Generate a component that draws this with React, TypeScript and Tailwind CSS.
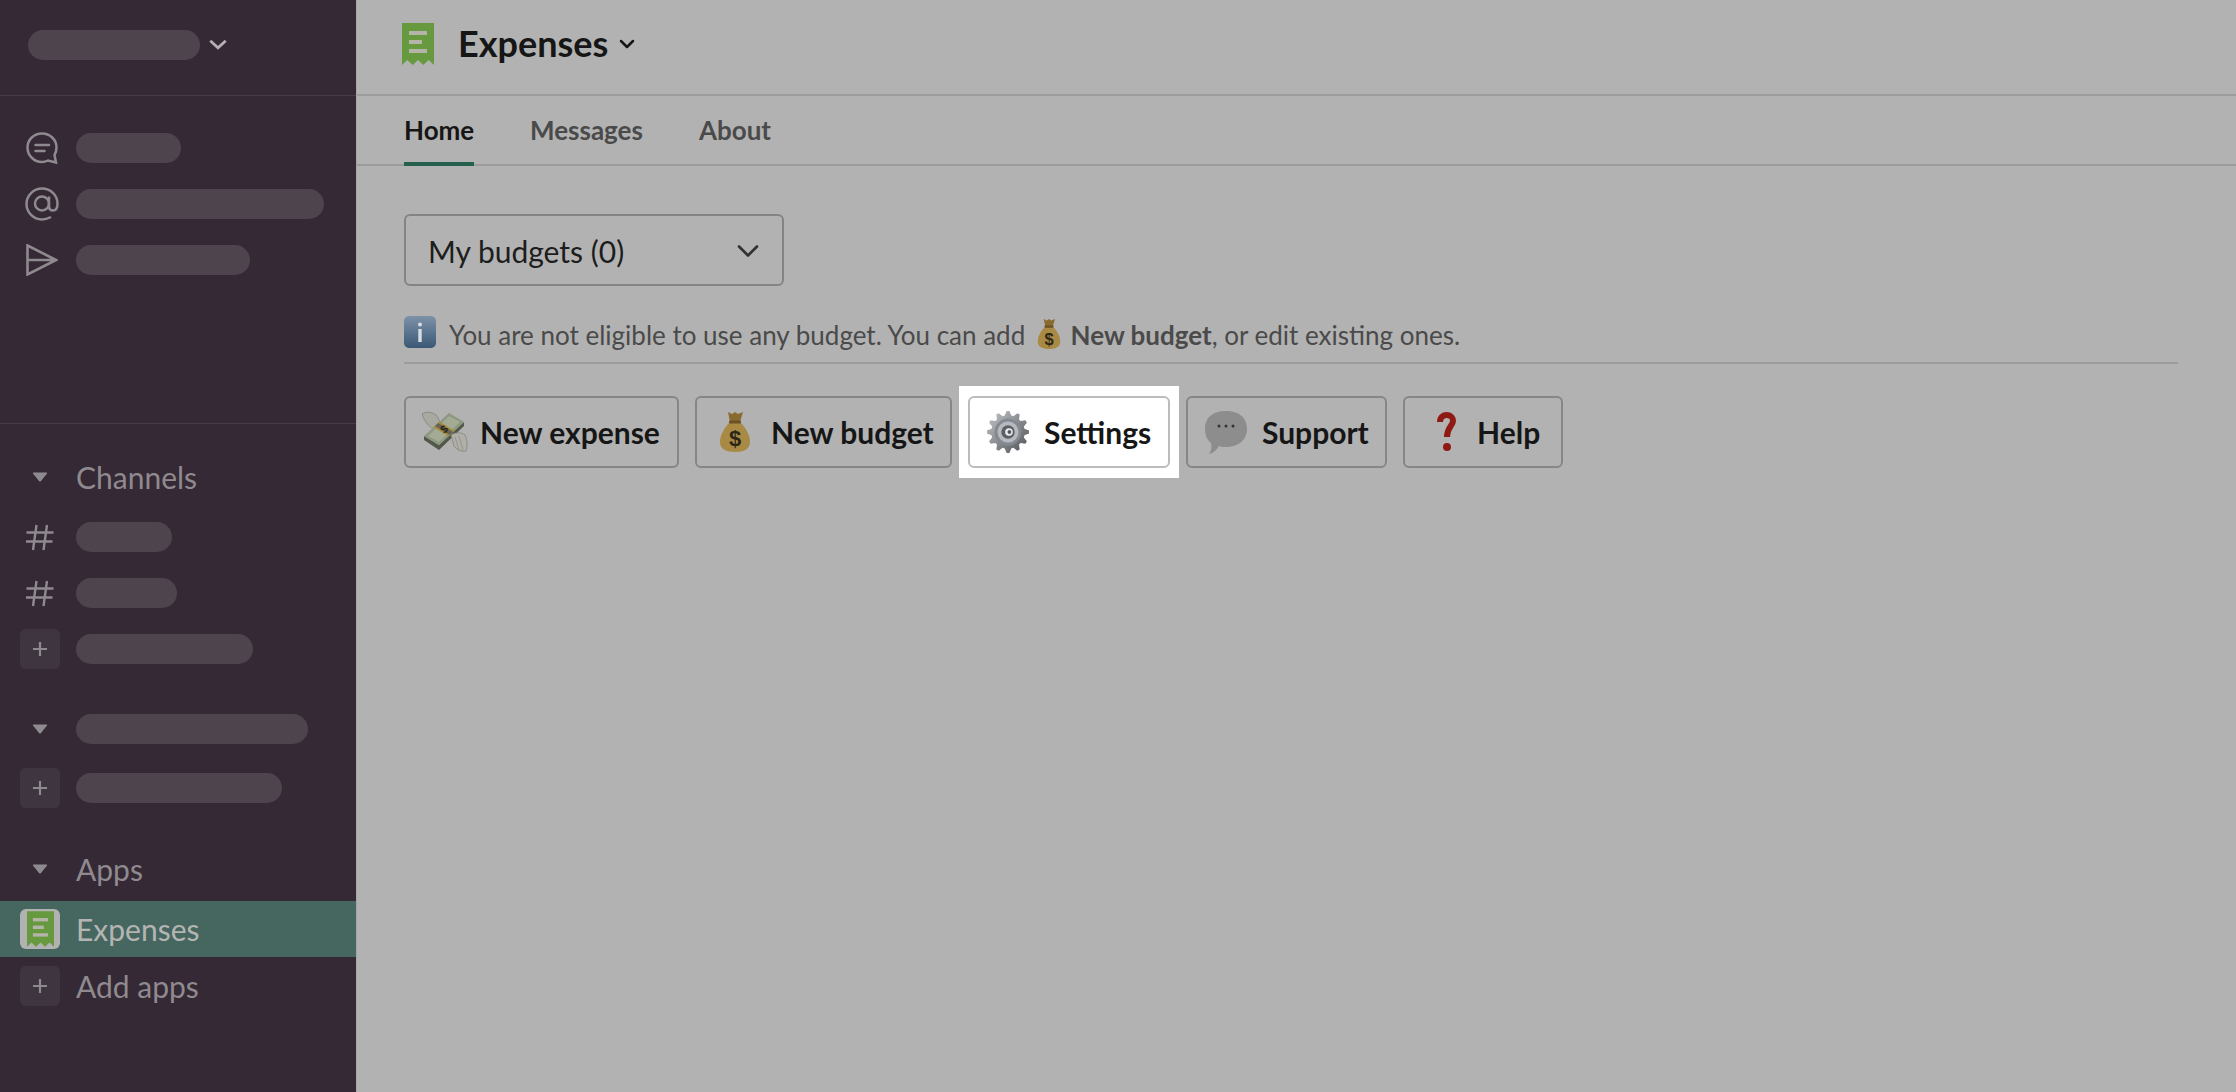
import { ChevronDown } from "lucide-react";
import type { ReactNode } from "react";

// --- ICONS ---
function Receipt({ className }: { className?: string }) {
  return (
    <svg viewBox="0 0 32 42" className={className}>
      <path d="M0 0H32V42L26.7 37L21.3 42L16 37L10.7 42L5.3 37L0 42Z" fill="#67993f" />
      <rect x="7" y="8" width="18" height="4" fill="#b4b4a8" />
      <rect x="7" y="17" width="13" height="4" fill="#b4b4a8" />
      <rect x="7" y="26" width="18" height="4" fill="#b4b4a8" />
    </svg>
  );
}

function Caret() {
  return (
    <svg viewBox="0 0 16 10" className="w-4 h-2.5">
      <path d="M1 1.5Q0.5 0.5 2 0.5H14Q15.5 0.5 15 1.5L9 9Q8 10 7 9Z" fill="#8f8a8f" />
    </svg>
  );
}

function HashIcon() {
  return (
    <svg viewBox="0 0 28 28" className="w-7 h-7" fill="none" stroke="#8f8a8f" strokeWidth="2.4">
      <path d="M0.5 9.5H27.500M0 18.500H26.500M10.500 2L7 27M21 2L17.500 27" />
    </svg>
  );
}

function PlusBox() {
  return (
    <div className="w-10 h-10 rounded-md bg-[#3f3540] flex items-center justify-center">
      <svg viewBox="0 0 16 16" className="w-4 h-4" stroke="#8f8a8f" strokeWidth="2.2">
        <path d="M8 1V15M1 8H15" />
      </svg>
    </div>
  );
}

function ThreadIcon() {
  return (
    <svg viewBox="0 0 32 32" className="w-8 h-8 ml-1" fill="none" stroke="#8f8a8f" strokeWidth="2.5">
      <path d="M16 1.500C8 1.500 1.500 7.500 1.500 15.500S8 30 16 30C18.500 30 20 29.500 22 28.500L30 30.500L28.500 23C30 20.500 30.500 18 30.500 15.500C30.500 7.500 24 1.500 16 1.500Z" />
      <path d="M9.500 13H23M9.500 19H18.500" strokeLinecap="round" />
    </svg>
  );
}

function AtIcon() {
  return (
    <svg viewBox="0 0 34 34" className="w-[34px] h-[34px] ml-1" fill="none" stroke="#8f8a8f" strokeWidth="2.5">
      <circle cx="17" cy="16.500" r="7" />
      <path d="M24 9.500V19C24 22.500 26 23.500 28 23.500C31 23.500 32.500 20.500 32.500 16.500C32.500 8 25.500 1.500 17 1.500C8.500 1.500 1.500 8.500 1.500 17C1.500 25.500 8.500 32.500 17 32.500C20 32.500 23 31.500 26 30" />
    </svg>
  );
}

function SendIcon() {
  return (
    <svg viewBox="0 0 32 32" className="w-8 h-8 ml-1" fill="none" stroke="#8f8a8f" strokeWidth="2.6">
      <path d="M1.500 1.500L30 16L1.500 30.500ZM1.500 16H30" />
    </svg>
  );
}

function InfoEmoji() {
  return (
    <svg viewBox="0 0 32 32" className="w-8 h-8 shrink-0">
      <defs>
        <linearGradient id="info" x1="0" y1="0" x2="0" y2="1">
          <stop offset="0" stopColor="#7d92a8" />
          <stop offset="1" stopColor="#3a5876" />
        </linearGradient>
      </defs>
      <rect width="32" height="32" rx="5" fill="url(#info)" />
      <circle cx="16" cy="8.500" r="2" fill="#d8dde2" />
      <rect x="14.300" y="13" width="3.400" height="13" fill="#d8dde2" />
    </svg>
  );
}

function BagEmoji({ className }: { className?: string }) {
  return (
    <svg viewBox="0 0 32 42" className={className}>
      <path d="M9 1L13 3L16 1L19 3L24 1L21 11H11Z" fill="#8a6b2f" />
      <path d="M11 11C5 17 1 24 1 31C1 38 7 41 16 41C25 41 31 38 31 31C31 24 27 17 21 11Z" fill="#a98a45" />
      <rect x="10" y="9.500" width="12" height="3" rx="1" fill="#6b5224" />
      <text x="16" y="35" textAnchor="middle" fontSize="22" fontFamily="Liberation Sans" fontWeight="700" fill="#2b2716">
        $
      </text>
    </svg>
  );
}

function WingsEmoji() {
  return (
    <svg viewBox="0 0 46 42" className="w-[46px] h-[42px]">
      {/* back wing */}
      <path d="M0 3C5 0 10 1 14 4C17 7 18 11 18 16L12 18C7 16 2 10 0 3Z" fill="#a9a9a1" stroke="#7c7c76" strokeWidth="0.7" />
      {/* bundle: thick edge, then the top note */}
      <path d="M2 25L17 34L42 11V15L17 39L2 29Z" fill="#52584a" />
      <path d="M2 25L27 2L42 11L17 34Z" fill="#8d9880" />
      <path d="M6 25L27 5L38 11L17 31Z" fill="#a3ab95" />
      {/* paper band */}
      <path d="M11.500 16.300L17.500 10.700L32.500 19.700L26.500 25.300Z" fill="#a98a35" />
      <path d="M13 14.900L16 12.100L31 21.100L28 23.900Z" fill="#66645a" />
      <text x="22" y="22" textAnchor="middle" fontSize="11" fontFamily="Liberation Sans" fontWeight="700" fill="#2b2716" transform="rotate(-43 22 18)">
        $
      </text>
      {/* front wing */}
      <path d="M29 24C33 21 39 21 43 24C45 28 46 34 44 40C40 41 35 39 32 35Z" fill="#b0b0a8" stroke="#7c7c76" strokeWidth="0.7" />
      <path d="M33 26L37 39M37 25L41 39" fill="none" stroke="#8b8b84" strokeWidth="0.7" />
    </svg>
  );
}

// gear outline, worked out from tooth count so the teeth stay even
const gearPoints = Array.from({ length: 48 }, (_, i) => {
  const step = i % 4;
  const r = step === 0 || step === 1 ? 22 : 17.5;
  const a = ((i - 0.5) / 48) * Math.PI * 2;
  return `${(23 + r * Math.cos(a)).toFixed(2)},${(23 + r * Math.sin(a)).toFixed(2)}`;
}).join(" ");

function GearEmoji() {
  return (
    <svg viewBox="0 0 46 46" className="w-[44px] h-[46px]">
      <defs>
        <linearGradient id="gear" x1="0" y1="0" x2="1" y2="1">
          <stop offset="0" stopColor="#c3c6cb" />
          <stop offset="1" stopColor="#4e5257" />
        </linearGradient>
      </defs>
      <polygon points={gearPoints} fill="url(#gear)" />
      <circle cx="23" cy="23" r="14" fill="#858a90" />
      <circle cx="23" cy="23" r="11" fill="#b6babf" />
      <circle cx="23" cy="23" r="7" fill="#5c6066" />
      <circle cx="24" cy="23" r="4" fill="#eceef0" />
      <circle cx="24.500" cy="23" r="2" fill="#55595e" />
    </svg>
  );
}

function BubbleEmoji() {
  return (
    <svg viewBox="0 0 44 44" className="w-11 h-11">
      <path d="M22 1C33 1 43 6 43 19C43 31 33 37 22 37C19 37 17 37 15 36C13 40 9 43 5 44C7 41 8 37 7 33C3 30 1 25 1 19C1 6 11 1 22 1Z" fill="#8d8d8d" />
      <circle cx="15" cy="16" r="1.500" fill="#333" />
      <circle cx="22" cy="16" r="1.500" fill="#333" />
      <circle cx="29" cy="16" r="1.500" fill="#333" />
    </svg>
  );
}

function QuestionEmoji() {
  return (
    <svg viewBox="0 0 20 42" className="w-5 h-[42px]">
      <path d="M3 11C3 6 6 4 10 4C14 4 16 7 16 10C16 15 10 16 10 26" fill="none" stroke="#8f1a14" strokeWidth="6" />
      <circle cx="10" cy="36" r="4" fill="#8f1a14" />
    </svg>
  );
}

// --- SIDEBAR ---
function SideRow({ icon, children, className = "" }: { icon: ReactNode; children: ReactNode; className?: string }) {
  return (
    <div className={`h-14 flex items-center shrink-0 ${className}`}>
      <div className="w-20 pl-5 pr-5 flex justify-center shrink-0">{icon}</div>
      <div className="-ml-1">{children}</div>
    </div>
  );
}

function Pill({ w }: { w: string }) {
  return <div className={`h-[30px] rounded-full bg-[#4e444e] ${w}`} />;
}

function Sidebar() {
  return (
    <aside className="w-[356px] shrink-0 bg-[#342934] flex flex-col text-[30px] text-[#8f8a8f]">
      <div className="h-[96px] border-b border-[#473c47] pl-7 pb-[6px] flex items-center gap-[9px] shrink-0">
        <div className="h-[30px] w-[172px] rounded-full bg-[#4e444e]" />
        <svg viewBox="0 0 16 10" className="w-[18px] h-[11px]" fill="none" stroke="#b4b0b4" strokeWidth="2.500">
          <path d="M1 1.500L8 8L15 1.500" />
        </svg>
      </div>

      <div className="h-[328px] border-b border-[#473c47] pt-6 shrink-0">
        <SideRow icon={<ThreadIcon />}><Pill w="w-[105px]" /></SideRow>
        <SideRow icon={<AtIcon />}><Pill w="w-[248px]" /></SideRow>
        <SideRow icon={<SendIcon />}><Pill w="w-[174px]" /></SideRow>
      </div>

      <div className="pt-[25px] flex flex-col">
        <SideRow icon={<Caret />}>Channels</SideRow>
        <SideRow icon={<HashIcon />} className="mt-[4px]"><Pill w="w-[96px]" /></SideRow>
        <SideRow icon={<HashIcon />}><Pill w="w-[101px]" /></SideRow>
        <SideRow icon={<PlusBox />}><Pill w="w-[177px]" /></SideRow>
        <SideRow icon={<Caret />} className="mt-[24px]"><Pill w="w-[232px]" /></SideRow>
        <SideRow icon={<PlusBox />} className="mt-[3px]"><Pill w="w-[206px]" /></SideRow>
        <SideRow icon={<Caret />} className="mt-[25px]">Apps</SideRow>
        <SideRow
          className="mt-[4px] bg-[#46675f] text-[#b4b4b4]"
          icon={
            <div className="w-10 h-10 rounded-md bg-[#b2b2b2] flex justify-center pt-[2px] overflow-hidden">
              <Receipt className="w-[27px] h-9" />
            </div>
          }
        >
          Expenses
        </SideRow>
        <SideRow icon={<PlusBox />} className="mt-px">Add apps</SideRow>
      </div>
    </aside>
  );
}

// --- MAIN PANE ---
function ActionButton({ icon, label, className = "" }: { icon: ReactNode; label: string; className?: string }) {
  return (
    <div className={`h-[72px] rounded-md border-2 border-[#868686] flex items-center gap-3 text-[30px] font-bold text-[#161616] ${className}`}>
      {icon}
      {label}
    </div>
  );
}

export default function App() {
  return (
    <div className="flex h-screen w-full overflow-hidden bg-[#b2b2b2] font-[Lato,sans-serif]">
      <Sidebar />
      <main className="flex-1 min-w-0 border-l border-[#a5a5a5]">
        <header className="h-[96px] border-b-2 border-[#9c9c9c] pl-[45px] pb-[6px] flex items-center">
          <Receipt className="w-8 h-[42px]" />
          <h1 className="ml-[24px] -mt-[2px] text-[36px] font-bold text-[#161616]">Expenses</h1>
          <ChevronDown className="ml-[7px] w-6 h-6 text-[#161616]" strokeWidth={2.5} />
        </header>

        <nav className="h-[70px] border-b-2 border-[#9c9c9c] pl-[47px] flex gap-14 text-[26px] font-bold text-[#4a4a4a]">
          <div className="h-[70px] w-[70px] pt-0.5 border-b-4 border-[#255f4d] flex items-center text-[#161616]">Home</div>
          <div className="h-[68px] flex items-center">Messages</div>
          <div className="h-[68px] flex items-center">About</div>
        </nav>

        <section className="pl-[47px] pr-[58px] pt-12">
          <div className="w-[380px] h-[72px] rounded-md border-2 border-[#848484] pl-[22px] pr-4 pt-0.5 flex items-center justify-between text-[30px] text-[#1d1d1d]">
            My budgets (0)
            <ChevronDown className="w-9 h-9 text-[#333]" strokeWidth={1.8} />
          </div>

          <div className="mt-[30px] h-[48px] border-b-2 border-[#9c9c9c] flex items-start text-[26px] text-[#4a4a4a]">
            <InfoEmoji />
            <p className="ml-[13px] mt-[3px] leading-8">
              You are not eligible to use any budget. You can add{" "}
              <BagEmoji className="inline w-6 h-8 -mt-2 ml-[5px] mr-[3px]" /> <b>New budget</b>, or edit existing ones.
            </p>
          </div>

          <div className="mt-8 flex gap-4">
            <ActionButton className="w-[275px] pl-4" icon={<WingsEmoji />} label="New expense" />
            <ActionButton className="w-[257px] pl-[22px] gap-[20px]" icon={<BagEmoji className="w-8 h-[42px]" />} label="New budget" />
            <div className="-mx-[9px] -my-[10px] px-[9px] py-[10px] bg-white">
              <ActionButton className="w-[202px] pl-4 gap-[14px] border-[#bcbcbc]" icon={<GearEmoji />} label="Settings" />
            </div>
            <ActionButton className="w-[201px] pl-4 gap-[14px]" icon={<BubbleEmoji />} label="Support" />
            <ActionButton className="w-[160px] pl-8 gap-[20px]" icon={<QuestionEmoji />} label="Help" />
          </div>
        </section>
      </main>
    </div>
  );
}
